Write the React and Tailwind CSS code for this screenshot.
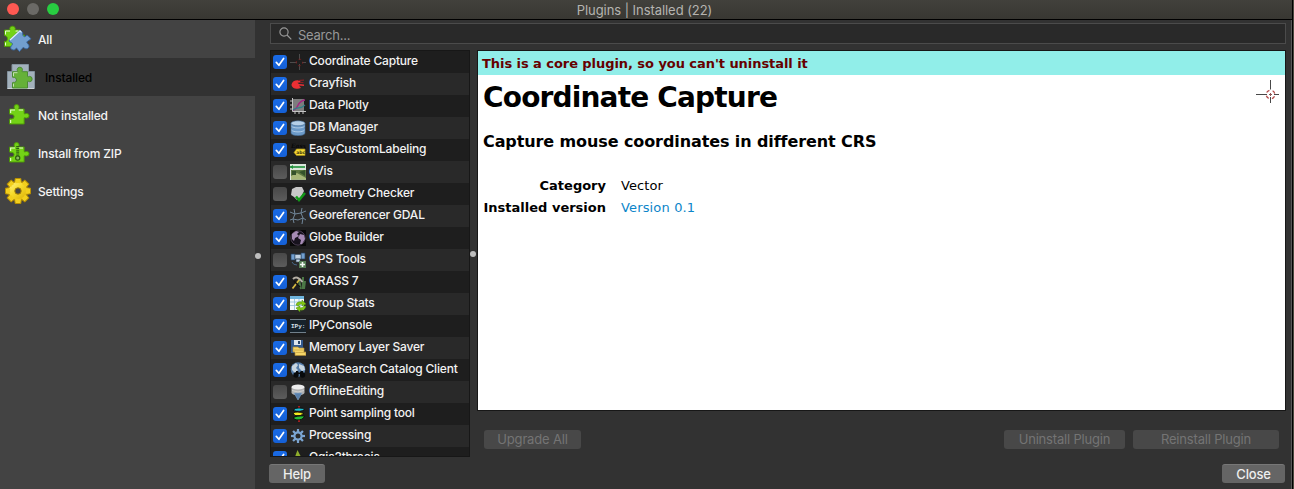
import React from 'react';

const PIECE = 'M2 5H6.4C6.9 4.6 6.2 4 6.2 2.9A2.3 2.3 0 0 1 10.8 2.9C10.8 4 10.1 4.6 10.6 5H15.5V9.6C16 10.2 16.6 9.5 17.8 9.5A2.2 2.2 0 0 1 17.8 14C16.6 14 16 13.3 15.5 13.9V20H2V15.2C2.5 14.6 3 15 4 14.9A2.2 2.2 0 0 0 4 10.4C3 10.4 2.5 10.6 2 10Z';

function Puzzle({ zip }) {
  return (
    <svg className="h-[22px] w-[22px]" viewBox="0 0 22 22">
      <g transform="translate(-0.6 0) scale(1.08 1)">
        <path d={PIECE} fill="#73d216" stroke="#4e9a06" strokeWidth="0.9" />
        <path d="M3 9V6H7M10.5 6H14.5M3 19V16" fill="none" stroke="#e9ffd0" strokeWidth="1" />
      </g>
      {zip && (
        <g stroke="#2f5f12" fill="none">
          <path d="M9.7 4V15" strokeWidth="3" strokeDasharray="1.2 0.9" />
          <circle cx="9.7" cy="16" r="2.1" strokeWidth="1.2" fill="#8ab860" />
        </g>
      )}
    </svg>
  );
}

function AllIcon() {
  return (
    <svg className="h-[28px] w-[28px]" viewBox="0 0 28 28">
      <path d="M0.500 5H6C5.200 2.800 6.300 1.200 8.500 1.200S11.800 2.800 11 5H16V10H20.500V15L12 21.500H0.500V16.500C4.500 17 4.500 11 0.500 10.500Z" fill="#73d216" stroke="#4e9a06" strokeWidth="0.9" />
      <path d="M1.500 9.500V6H6M1.500 20.500V17.500M11.500 6H14.500" fill="none" stroke="#edffd8" />
      <path d="M16 5L18.800 7.800C18.500 9.500 18.800 11.500 20.500 11.700C21.800 11.900 22.200 9.500 24 10.700L26.700 13.500C27 15 23.500 15.500 22.800 17C22.400 18.200 25.500 19.500 25 21.500C24.500 24 21.500 24.500 20 22.800C19 21.900 17.500 24.500 15.500 26.500C13.500 25 12.900 22.500 12.200 23.200C11 25.500 8.500 25.500 6.800 23.500C6 21.500 8.200 20.500 8.600 19C8.300 17.500 6 17.500 4.800 15.800Z" fill="#729fcf" stroke="#3465a4" strokeWidth="0.9" />
      <path d="M6 15L16 5.900L17.500 7.400" fill="none" stroke="#e3f0fc" strokeWidth="1.200" />
    </svg>
  );
}

function InstalledIcon() {
  return (
    <svg className="h-[28px] w-[30px]" viewBox="0 0 30 28">
      <path d="M6 1.500H22.500V8.500H28.500V25.500H1.500V8.500H6Z" fill="#a3b1bc" stroke="#83929e" />
      <path d="M1.500 25.500H28" stroke="#ccd3d7" />
      <g transform="translate(4.500 3.200)">
        <path d="M2 5.500H7C7.500 5 6.600 4.400 6.700 3.200A2.700 2.700 0 0 1 12 3.200C12 4.400 11.200 5 11.700 5.500H17V10.300C17.500 10.900 18 10.200 19 10.200A2.400 2.400 0 0 1 19 15.500C18 15.500 17.500 14.500 17 15.200V21.800H2V16.500C2.500 16 3 16.200 4 16.200A2.500 2.500 0 0 0 4 11.300C3 11.300 2.500 11.500 2 11Z" fill="#65b138" stroke="#4b8a35" />
        <path d="M3 10V6.500H7M3 20.500V17.500" fill="none" stroke="#c3dfb1" />
      </g>
    </svg>
  );
}

const TEETH = [0, 45, 90, 135, 180, 225, 270, 315];

function SettingsIcon() {
  return (
    <svg className="h-[28px] w-[28px]" viewBox="0 0 28 28">
      <defs>
        <linearGradient id="gold" gradientUnits="userSpaceOnUse" x1="4" y1="3" x2="23" y2="25">
          <stop offset="0" stopColor="#fff5a0" />
          <stop offset="0.45" stopColor="#f7dc2c" />
          <stop offset="1" stopColor="#d6a800" />
        </linearGradient>
      </defs>
      {TEETH.map((a) => (
        <path key={a} d="M10.500 7L11.200 1.500H16.800L17.500 7Z" fill="#f2d32a" stroke="#b88f00" strokeWidth="1" transform={`rotate(${a} 14 14)`} />
      ))}
      <circle cx="14" cy="14" r="9" fill="url(#gold)" />
      {TEETH.map((a) => (
        <path key={a} d="M11.500 8L12 2.500H16L16.500 8Z" fill="#f2cf1c" transform={`rotate(${a} 14 14)`} />
      ))}
      <circle cx="14" cy="14" r="8" fill="url(#gold)" />
      <circle cx="14" cy="14" r="3.200" fill="#454545" stroke="#a88300" />
    </svg>
  );
}

const GLYPHS = {
  target: (
    <g fill="none">
      <path d="M9.500 0V6M9.500 10V16M0 8.500H7M12 8.500H16" stroke="#4c4c4c" />
      <circle cx="9.500" cy="8.500" r="3.300" stroke="#7a1d1d" strokeDasharray="2.600 2.584" strokeDashoffset="1.300" />
    </g>
  ),
  crayfish: (
    <g>
      <path d="M1.500 8.500C2 5.500 5 4 8 4.200L10.500 5.300L10 6.500L7.500 6.800L9 8L14 8.500V10L9 9.500L11 12L8 12.800C4.500 13 1.500 11.500 1.500 8.500Z" fill="#ed2f34" />
      <path d="M8 4.500L14 4.200M10 6.300L13.500 6.500" stroke="#8c2026" strokeWidth="1.200" />
    </g>
  ),
  plotly: (
    <g fill="none">
      <path d="M2 1H14V13H2Z" fill="#7d7d7d" />
      <path d="M2.500 0V13.500H16M0 3H2M0 7H2M0 11H2M5 14V16M9 14V16M13 14V16" stroke="#c5c5c5" />
      <path d="M3 12C9 12 6 3 15 2" stroke="#a62383" strokeWidth="1.300" />
      <path d="M3 12C7 8 10 12 15 7" stroke="#31808a" strokeWidth="1.200" />
    </g>
  ),
  db: (
    <g stroke="#3f668f" strokeWidth="0.600">
      <path d="M1 3V13C1 16.500 15 16.500 15 13V3Z" fill="#6c9ac8" />
      <path d="M1.500 6.200C3 8.500 13 8.500 14.500 6.200M1.500 10C3 12.500 13 12.500 14.500 10" fill="none" stroke="#b5cfe8" strokeWidth="0.900" />
      <ellipse cx="8" cy="3.300" rx="7" ry="2.500" fill="#b6d0e8" />
    </g>
  ),
  label: (
    <g>
      <text x="1" y="6" fontSize="6" fontStyle="italic" fontWeight="bold" fontFamily="DejaVu Serif" fill="#080808">Easy</text>
      <path d="M4 10.500L6.500 7H15V13.500H6.500Z" fill="#f6da36" stroke="#a28a17" strokeWidth="0.700" />
      <text x="6.200" y="12.200" fontSize="4.500" fontWeight="bold" fontFamily="DejaVu Sans" fill="#473b0c">abc</text>
    </g>
  ),
  evis: (
    <g>
      <path d="M0 0H16V16H0Z" fill="#dce5dd" />
      <path d="M1 6H16V15.500H1Z" fill="#5d7842" />
      <path d="M1 12L7 9L16 14V15.500H1Z" fill="#a7b779" />
      <path d="M2 7H6V11H2ZM9 8L15 6V12Z" fill="#34522b" />
      <path d="M0 3H15" stroke="#20913b" strokeWidth="1.600" />
      <path d="M0 3L3 1V5Z" fill="#20913b" />
    </g>
  ),
  geometry: (
    <g>
      <path d="M2 3L6 1H12L14 5L11 11L7 14L4 11L1 9Z" fill="#c8c8c8" />
      <path d="M6 10.500L9 14L15 7" fill="none" stroke="#129a18" strokeWidth="2.600" />
    </g>
  ),
  georef: (
    <path d="M4 1L5 6L3 11L4 15M12 0L11 5L13 10L12 16M0 4L5 6L11 5L16 3M0 12L3 11L8 12L13 10L16 12" fill="none" stroke="#71879a" strokeWidth="1" />
  ),
  globe: (
    <g>
      <path d="M0 0H16V16H0Z" fill="#080808" />
      <circle cx="8" cy="8" r="7.200" fill="#17121d" stroke="#655570" strokeWidth="0.700" />
      <path d="M2 4L6 1L9 2L7 4L9 6L5 8L4 11L2 9ZM10 4L14 5L15 9L12 14L10 14L11 10L8 8Z" fill="#a68bb5" />
    </g>
  ),
  gps: (
    <g>
      <path d="M1 2H5V8H1ZM11 1H15V7H11Z" fill="#729fcf" stroke="#233f60" strokeWidth="0.700" />
      <path d="M5 2.500H11V7H5ZM6 7H10V10H6Z" fill="#c3d3e3" stroke="#314a62" strokeWidth="0.600" />
      <path d="M2 10Q3 13 7 13" fill="none" stroke="#456687" />
      <path d="M9 9H16V16H9Z" fill="#557e55" />
      <path d="M12.500 10V15M10 12.500H15" stroke="#f2f7f2" strokeWidth="1.600" />
    </g>
  ),
  grass: (
    <g fill="none">
      <path d="M11 15L9 6M13 15L13 3M14 15L15 7M11 14L8 10" stroke="#4c7746" strokeWidth="2" />
      <path d="M2.500 14.500L9.500 5.500" stroke="#d7ba42" strokeWidth="1.800" />
      <path d="M3 5Q7 1 12.500 8" stroke="#b5afa5" strokeWidth="2" />
      <path d="M4 7L10 13" stroke="#14110f" strokeWidth="1.500" />
    </g>
  ),
  stats: (
    <g>
      <path d="M0 0H14V14H0Z" fill="#f5f9fc" />
      <path d="M0 0H14V3H0Z" fill="#6fb5dd" />
      <path d="M0 6H14M0 9.500H14M4.500 3V14M9 3V14" stroke="#91bfdc" strokeWidth="0.800" />
      <path d="M6 9Q7 5 12 6V4L16 8L12 10V8Q9 8 8 10ZM16 10Q15 15 10 14V16L6 12L10 10V12Q13 12 14 10Z" fill="#83c716" stroke="#4a8310" strokeWidth="0.500" />
    </g>
  ),
  ipy: (
    <g>
      <path d="M0 1H16V15H0Z" fill="#16222b" />
      <path d="M0 1.500H16M0 14.500H16" stroke="#71808b" />
      <text x="1" y="9.500" fontSize="6" fontWeight="bold" fontFamily="Liberation Mono" fill="#dae5eb">IPy:</text>
    </g>
  ),
  memory: (
    <g>
      <path d="M1 0H13V13H1Z" fill="#30598f" />
      <path d="M4 0H11V5H4Z" fill="#dce5ed" />
      <path d="M8 1H10V4H8Z" fill="#29476c" />
      <path d="M3 7H8L9 8H14V12H16V15.500H5V12H3Z" fill="#f4d568" stroke="#a98735" strokeWidth="0.700" />
      <path d="M4 10H13M6 12.500H15" stroke="#c9a645" strokeWidth="0.800" />
    </g>
  ),
  meta: (
    <g>
      <circle cx="8" cy="7.500" r="7.300" fill="#557da9" />
      <path d="M2 4L6 1L8 3L6 6L8 8L5 11L2 8ZM9 2L14 4L15 8L12 9L9 6Z" fill="#c8d5df" />
      <circle cx="6" cy="13" r="2.700" fill="#080a0c" />
      <circle cx="12.500" cy="13" r="2.700" fill="#080a0c" />
      <path d="M6 9H8L9 11L11 9H13V12H6Z" fill="#080a0c" />
    </g>
  ),
  offline: (
    <g>
      <path d="M1.500 3V9C3 12 13 12 14.500 9V3Z" fill="#b1b1b1" />
      <ellipse cx="8" cy="3" rx="6.500" ry="2.500" fill="#eeeeee" />
      <path d="M2 6.500Q8 9.500 14 6.500" fill="none" stroke="#dcdcdc" strokeWidth="0.700" />
      <path d="M4 9H12L8 16Z" fill="#587fab" stroke="#8fb0d4" strokeWidth="0.500" />
    </g>
  ),
  point: (
    <g>
      <path d="M9 0V16" stroke="#e52222" strokeWidth="1.300" />
      <path d="M3 4.500Q5 1.500 9 2Q14 2 14.500 3.500Q11 6.500 3 4.500Z" fill="#20bdd0" stroke="#050505" strokeWidth="0.800" />
      <path d="M3 7Q7 5 14 7.500Q11 10.500 5 9.500Z" fill="#f5ec22" stroke="#050505" strokeWidth="0.800" />
      <path d="M3 12Q6 9.500 14.500 10Q13 14.500 6 13.800Z" fill="#25bc36" stroke="#050505" strokeWidth="0.800" />
    </g>
  ),
  gear: (
    <g>
      {TEETH.map((a) => (
        <path key={a} d="M8 5V1" stroke="#7ba5d2" strokeWidth="2.200" transform={`rotate(${a} 8 8)`} />
      ))}
      <circle cx="8" cy="8" r="3.600" fill="none" stroke="#7ba5d2" strokeWidth="2.200" />
    </g>
  ),
  tree: <path d="M7.500 0L10 5L13 10H4L6 4Z" fill="#8fae2c" />,
};

const PLUGINS = [
  ['Coordinate Capture', 'target', true],
  ['Crayfish', 'crayfish', true],
  ['Data Plotly', 'plotly', true],
  ['DB Manager', 'db', true],
  ['EasyCustomLabeling', 'label', true],
  ['eVis', 'evis', false],
  ['Geometry Checker', 'geometry', false],
  ['Georeferencer GDAL', 'georef', true],
  ['Globe Builder', 'globe', true],
  ['GPS Tools', 'gps', false],
  ['GRASS 7', 'grass', true],
  ['Group Stats', 'stats', true],
  ['IPyConsole', 'ipy', true],
  ['Memory Layer Saver', 'memory', true],
  ['MetaSearch Catalog Client', 'meta', true],
  ['OfflineEditing', 'offline', false],
  ['Point sampling tool', 'point', true],
  ['Processing', 'gear', true],
  ['Qgis2threejs', 'tree', true],
];

function Checkbox({ checked }) {
  return checked ? (
    <span className="mt-1 flex size-[14px] shrink-0 items-center justify-center rounded-[3px] bg-gradient-to-b from-[#1a6be6] to-[#1560d6]">
      <svg className="size-[14px]" viewBox="0 0 14 14">
        <path d="M3.300 7.400L5.900 10.300L10.600 3.500" fill="none" stroke="#fff" strokeWidth="1.700" strokeLinecap="round" strokeLinejoin="round" />
      </svg>
    </span>
  ) : (
    <span className="mt-1 size-[14px] shrink-0 rounded-[3px] bg-gradient-to-b from-[#484848] to-[#5c5c5c]" />
  );
}

function PluginRow({ name, icon, checked }) {
  return (
    <li className="flex h-[22px] shrink-0 items-start pl-0.5 odd:bg-[#1e1e1e] even:bg-[#292929]">
      <Checkbox checked={checked} />
      <svg className="ml-[3px] mt-[3px] size-4 shrink-0" viewBox="0 0 16 16">{GLYPHS[icon]}</svg>
      <span className="ml-[3px] whitespace-nowrap text-[12px] font-medium leading-[19px] tracking-[-0.18px] text-[#f2f2f2]">{name}</span>
    </li>
  );
}

const NAV = [
  { label: 'All', icon: <AllIcon />, pad: 'pl-1 gap-1.5' },
  { label: 'Installed', icon: <InstalledIcon />, pad: 'pl-1.5 gap-[9px]', active: true },
  { label: 'Not installed', icon: <Puzzle />, pad: 'pl-2 gap-2' },
  { label: 'Install from ZIP', icon: <Puzzle zip />, pad: 'pl-2 gap-2' },
  { label: 'Settings', icon: <SettingsIcon />, pad: 'pl-1 gap-1.5' },
];

function Sidebar() {
  return (
    <nav className="flex w-[255px] shrink-0 flex-col bg-[#434343]">
      {NAV.map((n) => (
        <div key={n.label} className={`flex h-[38px] items-center ${n.pad} ${n.active ? 'bg-[#323232] text-black' : 'text-[#f4f4f4]'}`}>
          {n.icon}
          <span className="pt-0.5 text-[12px] font-medium tracking-[-0.15px]">{n.label}</span>
        </div>
      ))}
    </nav>
  );
}

function TitleBar() {
  return (
    <header className="flex h-5 shrink-0 items-center border-b border-black bg-gradient-to-b from-[#42413c] to-[#383732] pl-[7px]">
      <div className="flex w-[53px] shrink-0 gap-2 pb-px">
        <span className="size-3 rounded-full bg-[#ff5952]" />
        <span className="size-3 rounded-full bg-[#6b6a66]" />
        <span className="size-3 rounded-full bg-[#28cd41]" />
      </div>
      <h1 className="flex-1 pr-[63px] text-center text-[13px] leading-[18px] tracking-[-0.06px] text-[#b5b4b0]">Plugins | Installed (22)</h1>
    </header>
  );
}

function Details() {
  return (
    <section className="h-[361px] border border-[#171717] bg-white font-['DejaVu_Sans',sans-serif] text-black">
      <p className="h-6 bg-[#91eee9] pl-1 pt-px text-[13px] font-bold leading-6 tracking-[-0.06px] text-[#660000]">This is a core plugin, so you can't uninstall it</p>
      <div className="flex justify-between pl-[5px] pr-[6px]">
        <div>
          <h2 className="mt-1.5 text-[28px] font-bold leading-[34px] tracking-[-0.83px]">Coordinate Capture</h2>
          <h3 className="mt-[17px] text-[16px] font-bold leading-5 tracking-[-0.1px]">Capture mouse coordinates in different CRS</h3>
        </div>
        <svg className="mt-[5px] size-6" viewBox="0 0 24 24" fill="none">
          <path d="M15.500 0V9.500M15.500 17V23M1 14.500H12M19 14.500H24" stroke="#484848" />
          <path d="M15.500 13V16M14 14.500H17" stroke="#8f5555" />
          <circle cx="15.500" cy="14.500" r="4.300" stroke="#b44a4a" strokeWidth="1.300" strokeDasharray="3.400 3.354" strokeDashoffset="-1.700" />
        </svg>
      </div>
      <dl className="mt-[23px] grid grid-cols-[123px_auto] gap-x-[15px] pl-[5px] text-[13px] leading-[22px]">
        <dt className="text-right font-bold">Category</dt>
        <dd className="tracking-[0.1px]">Vector</dd>
        <dt className="whitespace-nowrap text-right font-bold">Installed version</dt>
        <dd className="tracking-[0.15px] text-[#0c85c9]">Version 0.1</dd>
      </dl>
    </section>
  );
}

const BUTTON = 'flex h-[19px] items-center justify-center rounded-[3px] text-[13px] leading-none tracking-[-0.18px]';
const DISABLED = 'bg-[#484848] text-[#747474]';
const ENABLED = 'bg-[#656565] text-[#eeeeee] border-t border-[#777777] font-medium';

export default function App() {
  return (
    <div className="flex h-[489px] w-[1294px] overflow-hidden bg-[#4a493f] font-['Inter',sans-serif]">
      <div className="flex w-[1293px] flex-col border-r border-black bg-[#323232]">
        <TitleBar />
        <div className="flex min-h-0 flex-1 border-r border-[#575757]">
          <Sidebar />
          <div className="flex w-[15px] shrink-0 items-start pt-[233px]">
            <span className="size-1.5 rounded-full bg-[#bebebe]" />
          </div>
          <main className="flex w-[1016px] flex-col pt-[3px]">
            <label className="flex h-[21px] items-center border border-[#4b4b4b] bg-[#292929] pl-2 text-[#989898]">
              <svg className="size-[13px]" viewBox="0 0 13 13" fill="none" stroke="currentColor" strokeWidth="1.200">
                <circle cx="5" cy="5" r="4.100" />
                <path d="M8 8L12.300 12.300" />
              </svg>
              <span className="ml-[6px] pt-0.5 text-[13px] leading-4 tracking-[-0.25px]">Search...</span>
            </label>
            <div className="mt-1.5 flex h-[407px]">
              <ul className="flex w-[200px] shrink-0 flex-col overflow-hidden border border-[#171717]">
                {PLUGINS.map(([name, icon, checked]) => (
                  <PluginRow key={name} name={name} icon={icon} checked={checked} />
                ))}
              </ul>
              <div className="flex w-[7px] shrink-0 pt-[201px]">
                <span className="size-1.5 rounded-full bg-[#bebebe]" />
              </div>
              <div className="min-w-0 flex-1">
                <Details />
                <div className="mt-[19px] flex pl-[7px] pr-[7px]">
                  <button className={`${BUTTON} ${DISABLED} w-[97px]`}>Upgrade All</button>
                  <button className={`${BUTTON} ${DISABLED} ml-auto w-[121px]`}>Uninstall Plugin</button>
                  <button className={`${BUTTON} ${DISABLED} ml-2 w-[146px]`}>Reinstall Plugin</button>
                </div>
              </div>
            </div>
            <footer className="-ml-px mt-[7px] flex justify-between pr-px">
              <button className={`${BUTTON} ${ENABLED} w-14`}>Help</button>
              <button className={`${BUTTON} ${ENABLED} w-[63px]`}>Close</button>
            </footer>
          </main>
        </div>
      </div>
    </div>
  );
}
